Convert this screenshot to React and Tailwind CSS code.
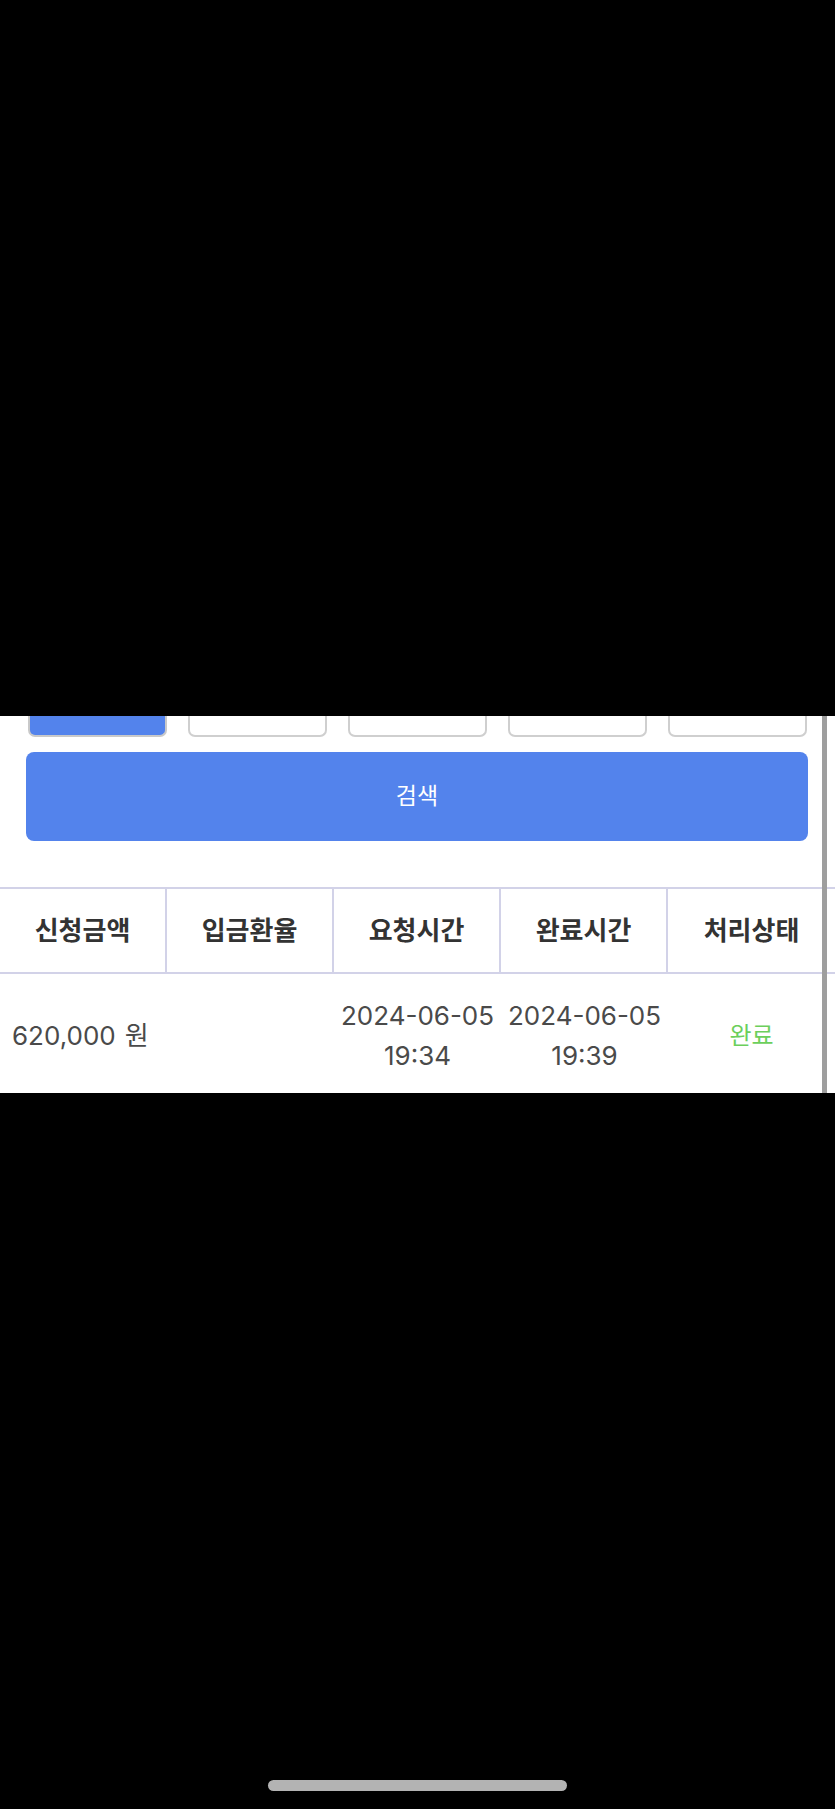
import React from "react";

const font = { fontFamily: '"Inter", "Noto Sans CJK KR", sans-serif' };

const headers = ["신청금액", "입금환율", "요청시간", "완료시간", "처리상태"];

export default function App() {
  return (
    <div className="w-[835px] h-[1809px] bg-black flex flex-col" style={font}>
      <div className="h-[716px] shrink-0" />

      {/* visible white page area */}
      <div className="relative h-[377px] shrink-0 bg-white overflow-hidden">
        {/* period buttons, cut off at the top */}
        <div className="flex gap-[21px] pl-[28px]">
          <div className="w-[139px] h-[21px] rounded-b-[7px] bg-[#5383ec] border-x-2 border-b-2 border-[#c9c9c9]" />
          <div className="w-[139px] h-[21px] rounded-b-[7px] bg-white border-x-2 border-b-2 border-[#cfcfcf]" />
          <div className="w-[139px] h-[21px] rounded-b-[7px] bg-white border-x-2 border-b-2 border-[#cfcfcf]" />
          <div className="w-[139px] h-[21px] rounded-b-[7px] bg-white border-x-2 border-b-2 border-[#cfcfcf]" />
          <div className="w-[139px] h-[21px] rounded-b-[7px] bg-white border-x-2 border-b-2 border-[#cfcfcf]" />
        </div>

        <div className="pl-[26px] pt-[15px]">
          <button className="w-[782px] h-[89px] rounded-[8px] bg-[#5383ec] text-white text-[23px] flex items-center justify-center">
            검색
          </button>
        </div>

        {/* table */}
        <div className="mt-[46px] w-[835px]">
          <div className="grid grid-cols-5 border-y-2 border-[#d2d2e8] h-[87px]">
            {headers.map((h, i) => (
              <div
                key={h}
                className={
                  i < 4
                    ? "flex items-center justify-center border-r-2 border-[#d2d2e8] text-[26px] font-bold text-[#333333]"
                    : "flex items-center justify-center text-[26px] font-bold text-[#333333]"
                }
              >
                {h}
              </div>
            ))}
          </div>
          <div className="grid grid-cols-5 h-[124px] text-[26px] text-[#4a4a4a] leading-[40px]">
            <div className="flex items-center pl-[12px]">
              620,000<span className="ml-[9px]">원</span>
            </div>
            <div />
            <div className="flex flex-col items-center justify-center">
              <span>2024-06-05</span>
              <span>19:34</span>
            </div>
            <div className="flex flex-col items-center justify-center">
              <span>2024-06-05</span>
              <span>19:39</span>
            </div>
            <div className="flex items-center justify-center text-[#6ccf5c] text-[24px]">완료</div>
          </div>
        </div>

        {/* scrollbar */}
        <div className="absolute top-0 bottom-0 left-[822px] w-[5px] bg-[#9e9e9e]" />
      </div>

      <div className="flex-1 flex flex-col items-center justify-end pb-[18px]">
        <div className="w-[299px] h-[11px] rounded-full bg-[#b3b3b3]" />
      </div>
    </div>
  );
}
